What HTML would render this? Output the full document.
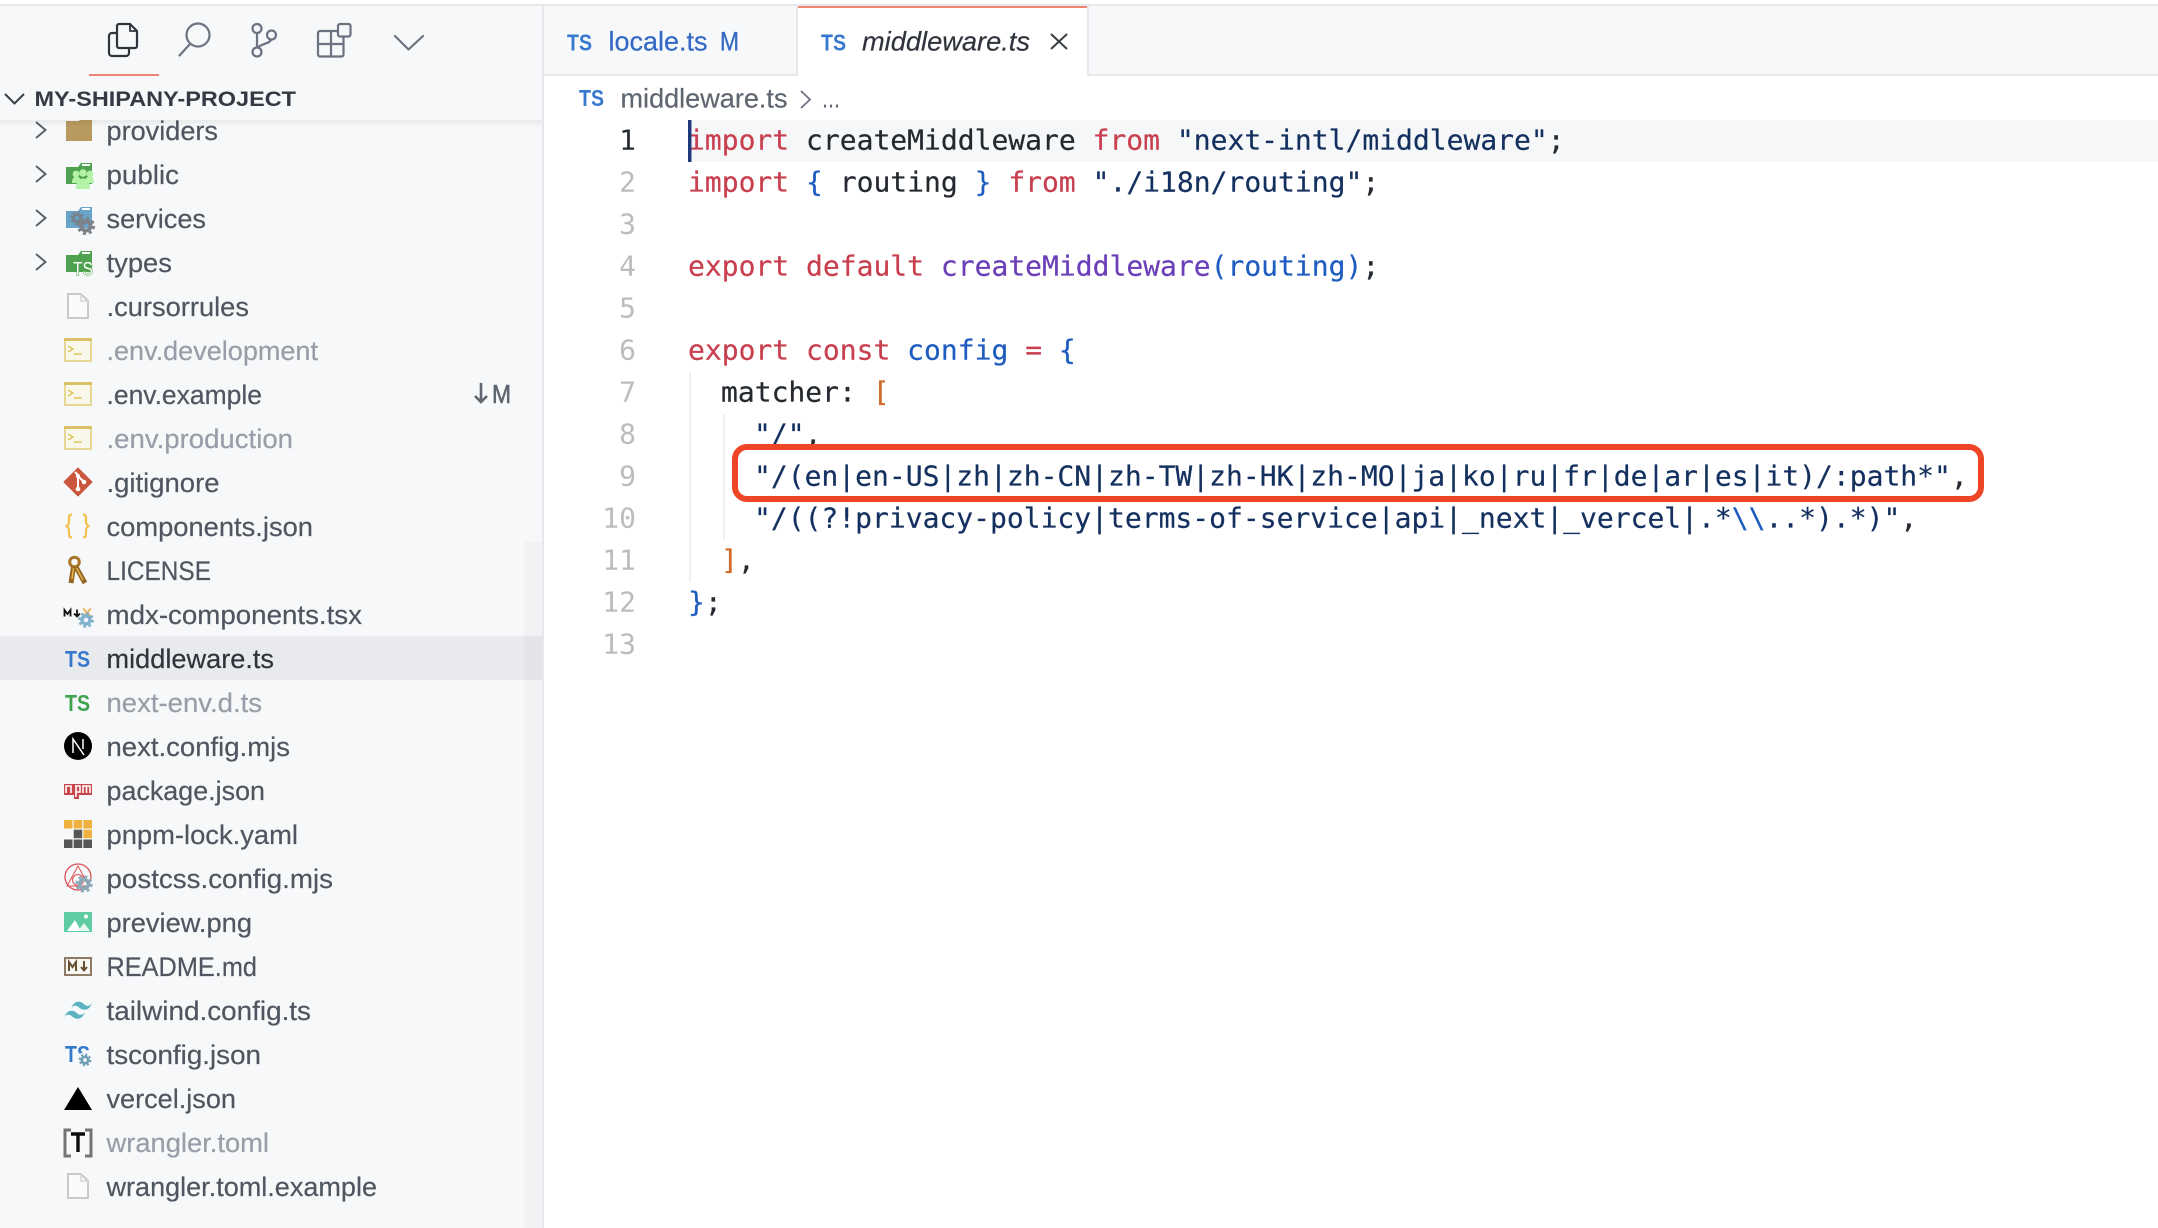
<!DOCTYPE html>
<html lang="en">
<head>
<meta charset="utf-8">
<title>middleware.ts</title>
<style>
html,body{margin:0;padding:0;background:#fff;width:2158px;height:1228px;overflow:hidden}
svg{display:block}
text{font-family:"Liberation Sans",sans-serif;white-space:pre}
.t{font-size:26.5px;fill:#4f5660;stroke:#4f5660;stroke-width:.2px}
.i{fill:#979ea8;stroke:#979ea8}
.s{fill:#2f343c;stroke:#2f343c}
.ts{font-size:23px;font-weight:700}
.c{font-family:"DejaVu Sans Mono","Liberation Mono",monospace;font-size:28px;fill:#24292f;stroke:#24292f;stroke-width:.22px}
.ln{font-family:"DejaVu Sans Mono","Liberation Mono",monospace;font-size:28px;fill:#bcbcbc;text-anchor:end}
.k{fill:#c8404f;stroke:#c8404f}.st{fill:#14305f;stroke:#14305f}.b{fill:#1f5cc0;stroke:#1f5cc0}.p{fill:#6a3fb8;stroke:#6a3fb8}.o{fill:#d0692a;stroke:#d0692a}
</style>
</head>
<body>
<svg xmlns="http://www.w3.org/2000/svg" width="2158" height="1228" viewBox="0 0 2158 1228">
<defs>
<g id="gear"><circle r="4" fill="none" stroke="currentColor" stroke-width="3.4"/><circle r="6.6" fill="none" stroke="currentColor" stroke-width="2.6" stroke-dasharray="2.6 2.6"/></g>
<g id="file"><path d="M68 10H81L88 17V34H68Z" fill="#f9fafb" stroke="#c9c9c9" stroke-width="2"/><path d="M81 10V17H88" fill="none" stroke="#d6d6d6" stroke-width="1.5"/></g>
<g id="env"><rect x="65" y="11" width="26" height="22" fill="#f9f7ea" stroke="#e6d795" stroke-width="2"/><rect x="64" y="10" width="28" height="3" fill="#dcc265"/><path d="M68 18l5 3-5 3M74 26h8" fill="none" stroke="#dcb83f" stroke-width="1.2"/></g>
<path id="chev" d="M36 14l9.500 8-9.500 8" fill="none" stroke="#59616b" stroke-width="2"/>
</defs>

<!-- page -->
<rect width="2158" height="1228" fill="#fff"/>
<rect y="4" width="2158" height="2" fill="#e6e8eb"/>

<!-- tab bar -->
<rect x="544" y="6" width="1614" height="68" fill="#f6f8fa"/>
<rect x="544" y="74" width="1614" height="2" fill="#e6e8eb"/>
<rect x="541" y="6" width="3" height="114" fill="#e6e8eb"/>
<rect x="796" y="6" width="2" height="70" fill="#e6e8eb"/>
<rect x="798" y="6" width="289" height="70" fill="#fff"/>
<rect x="798" y="6" width="289" height="2" fill="#ee8472"/>
<rect x="1087" y="6" width="2" height="70" fill="#e6e8eb"/>
<text class="ts" x="567" y="50.500" fill="#3778cf" textLength="25" lengthAdjust="spacingAndGlyphs">TS</text>
<text x="608.500" y="50.500" font-size="26.5" fill="#3368c4" stroke="#3368c4" stroke-width=".2" textLength="99" lengthAdjust="spacingAndGlyphs">locale.ts</text>
<text x="720" y="50.500" font-size="26.5" fill="#3368c4" stroke="#3368c4" stroke-width=".3" textLength="19" lengthAdjust="spacingAndGlyphs">M</text>
<text class="ts" x="821" y="50.500" fill="#3778cf" textLength="25" lengthAdjust="spacingAndGlyphs">TS</text>
<text x="862" y="50.500" font-size="26.500" font-style="italic" fill="#2f343c" stroke="#2f343c" stroke-width=".2" textLength="168" lengthAdjust="spacingAndGlyphs">middleware.ts</text>
<path d="M1051 34l16 15M1067 34l-16 15" stroke="#3a3f47" stroke-width="2" fill="none"/>

<!-- breadcrumb -->
<text class="ts" x="579" y="106" fill="#3778cf" textLength="25" lengthAdjust="spacingAndGlyphs">TS</text>
<text x="620.500" y="107.500" font-size="26.5" fill="#5f6670" stroke="#5f6670" stroke-width=".2" textLength="167" lengthAdjust="spacingAndGlyphs">middleware.ts</text>
<path d="M801 91l9 8.500-9 8.500" fill="none" stroke="#6b7280" stroke-width="1.800"/>
<text x="822" y="107.500" font-size="26.5" fill="#5f6670" textLength="18" lengthAdjust="spacingAndGlyphs">...</text>

<!-- editor -->
<rect x="692" y="120" width="1466" height="42" fill="#f6f7f8"/>
<rect x="689" y="372" width="2" height="210" fill="#eff0f2"/>
<rect x="723" y="414" width="2" height="126" fill="#eff0f2"/>

<text class="ln" x="636" y="149.500" style="fill:#24292f">1</text>
<text class="ln" x="636" y="191.500">2</text>
<text class="ln" x="636" y="233.500">3</text>
<text class="ln" x="636" y="275.500">4</text>
<text class="ln" x="636" y="317.500">5</text>
<text class="ln" x="636" y="359.500">6</text>
<text class="ln" x="636" y="401.500">7</text>
<text class="ln" x="636" y="443.500">8</text>
<text class="ln" x="636" y="485.500">9</text>
<text class="ln" x="636" y="527.500">10</text>
<text class="ln" x="636" y="569.500">11</text>
<text class="ln" x="636" y="611.500">12</text>
<text class="ln" x="636" y="653.500">13</text>

<text class="c" x="688" y="149.500"><tspan class="k">import</tspan> createMiddleware <tspan class="k">from</tspan> <tspan class="st">"next-intl/middleware"</tspan>;</text>
<text class="c" x="688" y="191.500"><tspan class="k">import</tspan> <tspan class="b">{</tspan> routing <tspan class="b">}</tspan> <tspan class="k">from</tspan> <tspan class="st">"./i18n/routing"</tspan>;</text>
<text class="c" x="688" y="275.500"><tspan class="k">export</tspan> <tspan class="k">default</tspan> <tspan class="p">createMiddleware</tspan><tspan class="b">(routing)</tspan>;</text>
<text class="c" x="688" y="359.500"><tspan class="k">export</tspan> <tspan class="k">const</tspan> <tspan class="b">config</tspan> <tspan class="k">=</tspan> <tspan class="b">{</tspan></text>
<text class="c" x="721" y="401.500">matcher: <tspan class="o">[</tspan></text>
<text class="c" x="754" y="443.500"><tspan class="st">"/"</tspan>,</text>
<text class="c" x="754" y="485.500"><tspan class="st">"/(en|en-US|zh|zh-CN|zh-TW|zh-HK|zh-MO|ja|ko|ru|fr|de|ar|es|it)/:path*"</tspan>,</text>
<text class="c" x="754" y="527.500"><tspan class="st">"/((?!privacy-policy|terms-of-service|api|_next|_vercel|.*</tspan><tspan class="b">\\</tspan><tspan class="st">..*).*)"</tspan>,</text>
<text class="c" x="721" y="569.500"><tspan class="o">]</tspan>,</text>
<text class="c" x="688" y="611.500"><tspan class="b">}</tspan>;</text>
<rect x="688" y="120" width="3.500" height="42" fill="#1e3a7c"/>
<rect x="735" y="447" width="1246" height="52" rx="12" fill="none" stroke="#ee4527" stroke-width="6"/>

<!-- sidebar -->
<rect x="0" y="6" width="542" height="1222" fill="#f6f8fa"/>
<rect x="542" y="6" width="2" height="1222" fill="#e6e8eb"/>
<rect x="524" y="542" width="18" height="686" fill="#f1f2f4"/>
<rect x="0" y="636" width="524" height="44" fill="#e8eaed"/>
<rect x="524" y="636" width="18" height="44" fill="#e2e4e7"/>

<!-- rows -->
<g transform="translate(0,108)"><use href="#chev"/><path d="M66 13H79L82 9H92V33H66Z" fill="#b99a5e"/><text class="t" x="106.500" y="32" textLength="111.500" lengthAdjust="spacingAndGlyphs">providers</text></g>

<g transform="translate(0,152)"><use href="#chev"/><path d="M66 15H78L81 11H92V32H66Z" fill="#4ea24f"/><rect x="82" y="12" width="8" height="2" fill="#fff"/><g fill="#b4f2a8"><circle cx="76" cy="22" r="3.400"/><circle cx="90" cy="22" r="3.400"/><circle cx="83" cy="21" r="3.800"/><path d="M72 31c0-5 2-6.500 4.500-6.500s4.500 1.500 4.500 6.500zM85 31c0-5 2-6.500 4.500-6.500s4.500 1.500 4.500 6.500z"/><path d="M76 37c0-8 3-10.500 7-10.500s7 2.500 7 10.500z"/></g><text class="t" x="106.500" y="32" textLength="72.500" lengthAdjust="spacingAndGlyphs">public</text></g>

<g transform="translate(0,196)"><use href="#chev"/><path d="M66 15H78L81 11H92V32H66Z" fill="#69a3c8"/><rect x="82" y="12" width="8" height="2" fill="#fff"/><use href="#gear" transform="translate(77,22) scale(.85)" color="#76818a"/><use href="#gear" transform="translate(86,30) scale(1.150)" color="#7c8288"/><text class="t" x="106.500" y="32" textLength="99.500" lengthAdjust="spacingAndGlyphs">services</text></g>

<g transform="translate(0,240)"><use href="#chev"/><path d="M66 15H78L81 11H92V32H66Z" fill="#4ea24f"/><rect x="82" y="12" width="8" height="2" fill="#fff"/><text x="73" y="35" font-family="Liberation Serif" font-size="18" fill="#fff" stroke="#4ea24f" stroke-width="1.200" paint-order="stroke" textLength="20" lengthAdjust="spacingAndGlyphs">TS</text><text class="t" x="106.500" y="32" textLength="65.500" lengthAdjust="spacingAndGlyphs">types</text></g>

<g transform="translate(0,284)"><use href="#file"/><text class="t" x="106.500" y="32" textLength="142.500" lengthAdjust="spacingAndGlyphs">.cursorrules</text></g>
<g transform="translate(0,328)"><use href="#env"/><text class="t i" x="106.500" y="32" textLength="211.500" lengthAdjust="spacingAndGlyphs">.env.development</text></g>
<g transform="translate(0,372)"><use href="#env"/><text class="t" x="106.500" y="32" textLength="155.500" lengthAdjust="spacingAndGlyphs">.env.example</text><path d="M481 11V30M475 24l6 6 6-6" fill="none" stroke="#5f6670" stroke-width="2.600"/><text x="492" y="31" font-size="26" fill="#5f6670" stroke="#5f6670" stroke-width=".6" textLength="19" lengthAdjust="spacingAndGlyphs">M</text></g>
<g transform="translate(0,416)"><use href="#env"/><text class="t i" x="106.500" y="32" textLength="186.500" lengthAdjust="spacingAndGlyphs">.env.production</text></g>

<g transform="translate(0,460)"><path d="M78 8L92 22L78 36L64 22Z" fill="#cb563e" stroke="#cb563e" stroke-width="1" stroke-linejoin="round"/><path d="M75 12l3.500 3.500M78 15V28M78 16l6 6" stroke="#fff" stroke-width="2" fill="none"/><circle cx="78" cy="29" r="2.300" fill="#fff"/><circle cx="84" cy="22" r="2.300" fill="#fff"/><circle cx="78" cy="16" r="2" fill="#fff"/><text class="t" x="106.500" y="32" textLength="113" lengthAdjust="spacingAndGlyphs">.gitignore</text></g>

<g transform="translate(0,504)"><path d="M72 10.500c-3 0-3 1.500-3 4v3c0 2-1 3.500-2.500 4.500 1.500 1 2.500 2.500 2.500 4.500v3c0 2.500 0 4 3 4M83 10.500c3 0 3 1.500 3 4v3c0 2 1 3.500 2.500 4.500-1.500 1-2.500 2.500-2.500 4.500v3c0 2.500 0 4-3 4" fill="none" stroke="#f4c04e" stroke-width="2.200"/><text class="t" x="106.500" y="32" textLength="206.500" lengthAdjust="spacingAndGlyphs">components.json</text></g>

<g transform="translate(0,548)"><circle cx="74.500" cy="14" r="4.800" fill="none" stroke="#a9762a" stroke-width="3"/><path d="M73.500 19L71 35M76 19L85 35" stroke="#95651f" stroke-width="5" fill="none"/><path d="M73.500 20L72 31M76.500 20L83 32" stroke="#e0b050" stroke-width="1.600" fill="none"/><text class="t" x="106.500" y="32" textLength="104.500" lengthAdjust="spacingAndGlyphs">LICENSE</text></g>

<g transform="translate(0,592)"><path d="M64.500 24.500V18l3 4 3-4v6.500" fill="none" stroke="#111" stroke-width="1.800"/><path d="M77 17.500V24M74 21.500l3 3 3-3" fill="none" stroke="#111" stroke-width="1.800"/><path d="M83 16.500l8 8.500M91 16.500l-8 8.500" stroke="#eeb04a" stroke-width="1.800"/><use href="#gear" transform="translate(86,28)" color="#7fb0cc"/><text class="t" x="106.500" y="32" textLength="255.500" lengthAdjust="spacingAndGlyphs">mdx-components.tsx</text></g>

<g transform="translate(0,636)"><text class="ts" x="65" y="31" fill="#3778cf" textLength="25" lengthAdjust="spacingAndGlyphs">TS</text><text class="t s" x="106.500" y="32" textLength="167.500" lengthAdjust="spacingAndGlyphs">middleware.ts</text></g>
<g transform="translate(0,680)"><text class="ts" x="65" y="31" fill="#3fa34d" textLength="25" lengthAdjust="spacingAndGlyphs">TS</text><text class="t i" x="106.500" y="32" textLength="155.500" lengthAdjust="spacingAndGlyphs">next-env.d.ts</text></g>

<g transform="translate(0,724)"><circle cx="78" cy="22" r="14" fill="#000"/><path d="M73 29V15L84 31M83 15V25" stroke="#fff" stroke-width="1.500" fill="none"/><text class="t" x="106.500" y="32" textLength="183.500" lengthAdjust="spacingAndGlyphs">next.config.mjs</text></g>

<g transform="translate(0,768)"><rect x="64" y="16" width="28" height="11" fill="#c9464a"/><rect x="74" y="27" width="5" height="4" fill="#c9464a"/><path d="M66 25v-7h5v7M75 18h5v6h-4M76 18v11M83 25v-7h7v7M86.500 18v7" fill="none" stroke="#fff" stroke-width="1.600"/><text class="t" x="106.500" y="32" textLength="158.500" lengthAdjust="spacingAndGlyphs">package.json</text></g>

<g transform="translate(0,812)"><g fill="#f0b03e"><rect x="64" y="8" width="8.500" height="8.500"/><rect x="73.700" y="8" width="8.500" height="8.500"/><rect x="83.400" y="8" width="8.600" height="8.500"/><rect x="83.400" y="17.700" width="8.600" height="8.500"/></g><g fill="#565656"><rect x="73.700" y="17.700" width="8.500" height="8.500"/><rect x="64" y="27.500" width="8.500" height="8.500"/><rect x="73.700" y="27.500" width="8.500" height="8.500"/><rect x="83.400" y="27.500" width="8.600" height="8.500"/></g><text class="t" x="106.500" y="32" textLength="191.500" lengthAdjust="spacingAndGlyphs">pnpm-lock.yaml</text></g>

<g transform="translate(0,856)"><circle cx="78" cy="21" r="13" fill="none" stroke="#dd4f52" stroke-width="1.300"/><path d="M78 10L67 30H89Z" fill="none" stroke="#dd4f52" stroke-width="1"/><circle cx="78" cy="24" r="5.500" fill="none" stroke="#dd4f52" stroke-width="1"/><use href="#gear" transform="translate(84,28) scale(1.100)" color="#8ba9b8"/><text class="t" x="106.500" y="32" textLength="226.500" lengthAdjust="spacingAndGlyphs">postcss.config.mjs</text></g>

<g transform="translate(0,900)"><rect x="64" y="12" width="28" height="20" fill="#5fcca3"/><path d="M67 31L75 20L81 31Z" fill="#fff"/><path d="M78 31L84 23L90 31Z" fill="#e8f7ef"/><circle cx="86" cy="16.500" r="2" fill="#fff"/><text class="t" x="106.500" y="32" textLength="145.500" lengthAdjust="spacingAndGlyphs">preview.png</text></g>

<g transform="translate(0,944)"><rect x="65" y="14" width="26" height="17" fill="#f9f7f2" stroke="#8f7a66" stroke-width="2"/><path d="M69 27v-9l3.500 5 3.500-5v9" fill="none" stroke="#66502f" stroke-width="2"/><path d="M84 17v9M81 23l3 3.500 3-3.500" fill="none" stroke="#66502f" stroke-width="2"/><text class="t" x="106.500" y="32" textLength="150.500" lengthAdjust="spacingAndGlyphs">README.md</text></g>

<g transform="translate(0,988)"><path d="M71 21c2-6 5.500-8 9.500-7 3 .8 4 3.800 7 3.800 2 0 3.700-1 4.500-3.300-1.500 6-5.500 8-9.500 7-3-.8-4-3.800-7-3.800-2 0-3.700 1-4.500 3.300z" fill="#5bb3c1"/><path d="M64 30c2-6 5.500-8 9.500-7 3 .8 4 3.800 7 3.800 2 0 3.700-1 4.500-3.300-1.500 6-5.500 8-9.500 7-3-.8-4-3.800-7-3.800-2 0-3.700 1-4.500 3.300z" fill="#5bb3c1"/><text class="t" x="106.500" y="32" textLength="204.500" lengthAdjust="spacingAndGlyphs">tailwind.config.ts</text></g>

<g transform="translate(0,1032)"><text class="ts" x="65" y="30" fill="#3778cf" textLength="25" lengthAdjust="spacingAndGlyphs">TS</text><circle cx="85" cy="28" r="8" fill="#f6f8fa"/><use href="#gear" transform="translate(85,28) scale(.8)" color="#6f9fb8"/><text class="t" x="106.500" y="32" textLength="154.500" lengthAdjust="spacingAndGlyphs">tsconfig.json</text></g>

<g transform="translate(0,1076)"><path d="M78 11L92 34H64Z" fill="#000"/><text class="t" x="106.500" y="32" textLength="129.500" lengthAdjust="spacingAndGlyphs">vercel.json</text></g>

<g transform="translate(0,1120)"><path d="M71 10h-6v26h6M85 10h6v26h-6" fill="none" stroke="#757575" stroke-width="3"/><path d="M71 14h14M78 14v18" fill="none" stroke="#0b0b0b" stroke-width="3.400"/><text class="t i" x="106.500" y="32" textLength="162.500" lengthAdjust="spacingAndGlyphs">wrangler.toml</text></g>

<g transform="translate(0,1164)"><use href="#file"/><text class="t" x="106.500" y="32" textLength="270.500" lengthAdjust="spacingAndGlyphs">wrangler.toml.example</text></g>

<!-- sticky header -->
<rect x="0" y="120" width="542" height="2" fill="#000" opacity=".05"/>
<rect x="0" y="122" width="542" height="2" fill="#000" opacity=".035"/>
<rect x="0" y="124" width="542" height="2" fill="#000" opacity=".02"/>
<rect x="0" y="6" width="542" height="114" fill="#f6f8fa"/>

<!-- activity icons -->
<g fill="none" stroke-linejoin="round" stroke-linecap="round">
<path d="M117 33h-5a3 3 0 0 0-3 3v17a3 3 0 0 0 3 3h14a3 3 0 0 0 3-3v-4" stroke="#2f343c" stroke-width="2.200"/>
<path d="M117 26a2 2 0 0 1 2-2h11l7 7v15a2 2 0 0 1-2 2h-16a2 2 0 0 1-2-2z" stroke="#2f343c" stroke-width="2.200"/>
<path d="M130 24v7h7" stroke="#2f343c" stroke-width="1.800"/>
<circle cx="198" cy="35" r="11.500" stroke="#6b7280" stroke-width="2.200"/>
<path d="M190 44L179.500 55.500" stroke="#6b7280" stroke-width="2.200"/>
<circle cx="257" cy="28.500" r="4.500" stroke="#6b7280" stroke-width="2.200"/>
<circle cx="257" cy="52" r="4.500" stroke="#6b7280" stroke-width="2.200"/>
<circle cx="271.500" cy="35" r="4.500" stroke="#6b7280" stroke-width="2.200"/>
<path d="M257 33V47.500M271 39.500C270 44 262 43 258 47.500" stroke="#6b7280" stroke-width="2.200"/>
<rect x="318" y="31" width="25.500" height="25.500" rx="2" stroke="#6b7280" stroke-width="2.200"/>
<path d="M318 44H343.500M331 44V31M331 44V56.500" stroke="#6b7280" stroke-width="2.200"/>
<rect x="338" y="24" width="12.500" height="12.500" rx="2" fill="#f6f8fa" stroke="#6b7280" stroke-width="2.200"/>
<path d="M395 36L408.500 49.500L423 36" stroke="#6b7280" stroke-width="2.200"/>
</g>
<rect x="89" y="74" width="70" height="2" fill="#ee8472"/>

<path d="M5 94L14.500 103.500L24 94" fill="none" stroke="#3a4048" stroke-width="2"/>
<text x="34.500" y="106" font-size="21.500" font-weight="700" fill="#343a43" textLength="261.500" lengthAdjust="spacingAndGlyphs">MY-SHIPANY-PROJECT</text>
</svg>
</body>
</html>
